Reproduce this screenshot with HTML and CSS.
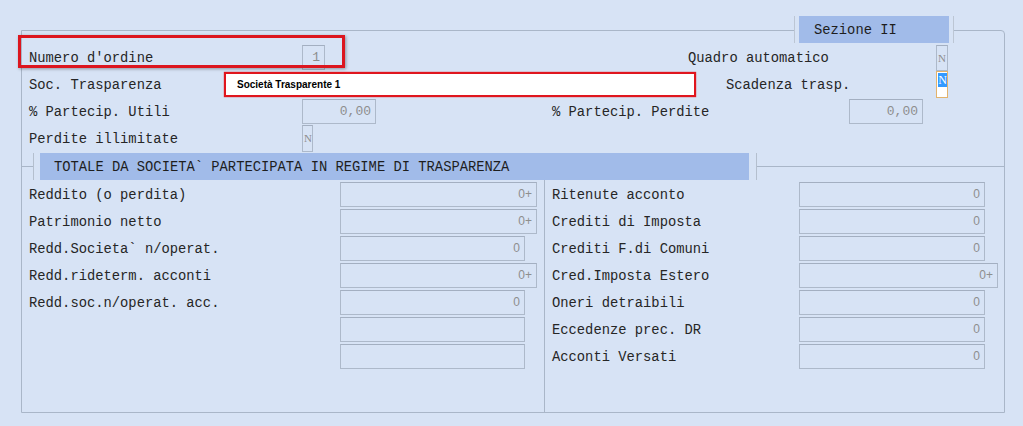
FILE: index.html
```html
<!DOCTYPE html>
<html lang="it">
<head>
    <meta charset="UTF-8">
    <title>Sezione II - Soc. Trasparenza</title>
    <link rel="stylesheet" href="styles.css">
</head>
<body>

<div class="page">
    <div class="frame">
        <!-- linguetta sezione -->
        <div class="tab"><span class="tab-label">Sezione II</span></div>

        <div class="row">
            <span class="lbl w273">Numero d'ordine</span>
            <span class="fld mono w23">1</span>
            <span class="lbl w248 ml363">Quadro automatico</span>
            <span class="fld flag w12">N</span>
        </div>
        <div class="row">
            <span class="lbl w195">Soc. Trasparenza</span>
            <span class="red-input">Società Trasparente 1</span>
            <span class="lbl w210 ml30">Scadenza trasp.</span>
            <span class="flag-active"><span class="sel">N</span></span>
        </div>
        <div class="row">
            <span class="lbl w273">% Partecip. Utili</span>
            <span class="fld mono w74">0,00</span>
            <span class="lbl w297 ml176">% Partecip. Perdite</span>
            <span class="fld mono w74">0,00</span>
        </div>
        <div class="row">
            <span class="lbl w273">Perdite illimitate</span>
            <span class="fld flag w11 tall">N</span>
        </div>

        <!-- totale da societa partecipata -->
        <div class="sec-head">
            <span class="line short"></span>
            <span class="tick"></span>
            <span class="sec-title">TOTALE DA SOCIETA` PARTECIPATA IN REGIME DI TRASPARENZA</span>
            <span class="tick"></span>
            <span class="line"></span>
        </div>

        <div class="cols">
            <div class="col left">
                <span class="lbl">Reddito (o perdita)</span><span class="fld num w197">0+</span>
                <span class="lbl">Patrimonio netto</span><span class="fld num w197">0+</span>
                <span class="lbl">Redd.Societa` n/operat.</span><span class="fld num w185">0</span>
                <span class="lbl">Redd.rideterm. acconti</span><span class="fld num w197">0+</span>
                <span class="lbl">Redd.soc.n/operat. acc.</span><span class="fld num w185">0</span>
                <span class="lbl"></span><span class="fld num w185"></span>
                <span class="lbl"></span><span class="fld num w185"></span>
            </div>
            <div class="col right">
                <span class="lbl">Ritenute acconto</span><span class="fld num w186">0</span>
                <span class="lbl">Crediti di Imposta</span><span class="fld num w186">0</span>
                <span class="lbl">Crediti F.di Comuni</span><span class="fld num w186">0</span>
                <span class="lbl">Cred.Imposta Estero</span><span class="fld num w199">0+</span>
                <span class="lbl">Oneri detraibili</span><span class="fld num w186">0</span>
                <span class="lbl">Eccedenze prec. DR</span><span class="fld num w186">0</span>
                <span class="lbl">Acconti Versati</span><span class="fld num w186">0</span>
            </div>
        </div>
    </div>

    <!-- evidenziazione -->
    <div class="highlight"></div>
</div>

</body>
</html>
```

FILE: styles.css
```css
body {
    margin: 0;
    background-color: #d7e3f5;
    color: #222;
    font-family: "Liberation Mono", "Courier New", monospace;
    font-size: 13.8px;
    height: 426px;
    overflow: hidden;
}

.page {
    position: relative;
    padding: 30px 0 0 21px;
}

.frame {
    position: relative;
    display: flex;
    flex-direction: column;
    box-sizing: border-box;
    width: 984px;
    height: 383px;
    padding-top: 13px;
    border: 1px solid #a9b6c8;
    border-top-right-radius: 4px;
}

.tab {
    position: absolute;
    top: -15px;
    right: 50px;
    display: flex;
    height: 27px;
    padding: 0 4px;
    background-color: #d7e3f5;
    border-left: 1px solid #bcc6d4;
    border-right: 1px solid #bcc6d4;
}

.tab-label {
    width: 135px;
    padding: 1px 0 0 15px;
    line-height: 27px;
    background-color: #a1bbe9;
    color: #1e1e1e;
}

/* righe superiori */
.row {
    display: flex;
    align-items: center;
    height: 27px;
    padding-left: 7px;
}

.lbl {
    padding-top: 2px;
    white-space: nowrap;
    color: #262626;
}

.w273 { width: 273px; }
.w248 { width: 248px; }
.w195 { width: 195px; }
.w210 { width: 210px; }
.w297 { width: 297px; }
.ml363 { margin-left: 363px; }
.ml30 { margin-left: 30px; }
.ml176 { margin-left: 176px; }

.fld {
    box-sizing: border-box;
    height: 25px;
    padding-right: 4px;
    border: 1px solid #adb9ca;
    border-top-color: #a3afc1;
    color: #8e8e8e;
    text-align: right;
    line-height: 23px;
    white-space: nowrap;
}

.w23 { width: 23px; }
.w74 { width: 74px; }
.w12 { width: 12px; }
.w11 { width: 11px; }
.w197 { width: 197px; }
.w185 { width: 185px; }
.w186 { width: 186px; }
.w199 { width: 199px; }

.mono {
    font-family: "Liberation Mono", monospace;
    font-size: 13px;
}

.flag {
    padding: 0;
    text-align: center;
    font-family: "Liberation Serif", serif;
    font-size: 11px;
    line-height: 24px;
    height: 26px;
}

.flag.tall {
    height: 27px;
    text-align: left;
    padding-left: 1px;
}

.num {
    font-family: "Liberation Sans", Arial, sans-serif;
    font-size: 12px;
}

.red-input {
    box-sizing: border-box;
    width: 472px;
    height: 25px;
    padding-left: 11px;
    background-color: #fff;
    border: 2px solid #e0161e;
    box-shadow: 0 0 1px #e0161e;
    font-family: "Liberation Sans", Arial, sans-serif;
    font-size: 10px;
    font-weight: bold;
    line-height: 21px;
    color: #000;
}

.flag-active {
    box-sizing: border-box;
    width: 12px;
    height: 27px;
    padding: 1px;
    background-color: #fff;
    border: 1px solid #e3b36c;
}

.flag-active .sel {
    display: block;
    height: 14px;
    width: 9px;
    background-color: #3399ff;
    color: #fff;
    font-family: "Liberation Serif", serif;
    font-size: 12px;
    line-height: 14px;
    text-align: center;
}

/* intestazione sezione */
.sec-head {
    display: flex;
    align-items: center;
    height: 27px;
    margin-top: 1px;
}

.line {
    flex: 1;
    height: 1px;
    background-color: #a9b6c8;
}

.line.short {
    flex: none;
    width: 11px;
}

.tick {
    width: 1px;
    height: 27px;
    background-color: #b4bfce;
}

.sec-title {
    box-sizing: border-box;
    width: 709px;
    height: 27px;
    margin: 0 7px 0 6px;
    padding: 1px 0 0 14px;
    background-color: #a1bbe9;
    line-height: 27px;
    color: #1e1e1e;
}

/* colonne inferiori */
.cols {
    display: flex;
    flex: 1;
}

.col {
    display: grid;
    align-content: start;
    align-items: center;
    row-gap: 2px;
    padding-top: 2px;
    padding-left: 7px;
}

.col.left {
    box-sizing: border-box;
    width: 523px;
    grid-template-columns: 311px auto;
    border-right: 1px solid #a9b6c8;
}

.col.right {
    flex: 1;
    grid-template-columns: 247px auto;
}

.col .fld {
    justify-self: start;
}

.highlight {
    position: absolute;
    left: 18px;
    top: 35px;
    box-sizing: border-box;
    width: 327px;
    height: 33px;
    border: 3px solid #dc161f;
    box-shadow: 1px 1px 3px rgba(0, 0, 0, 0.35);
}
```
